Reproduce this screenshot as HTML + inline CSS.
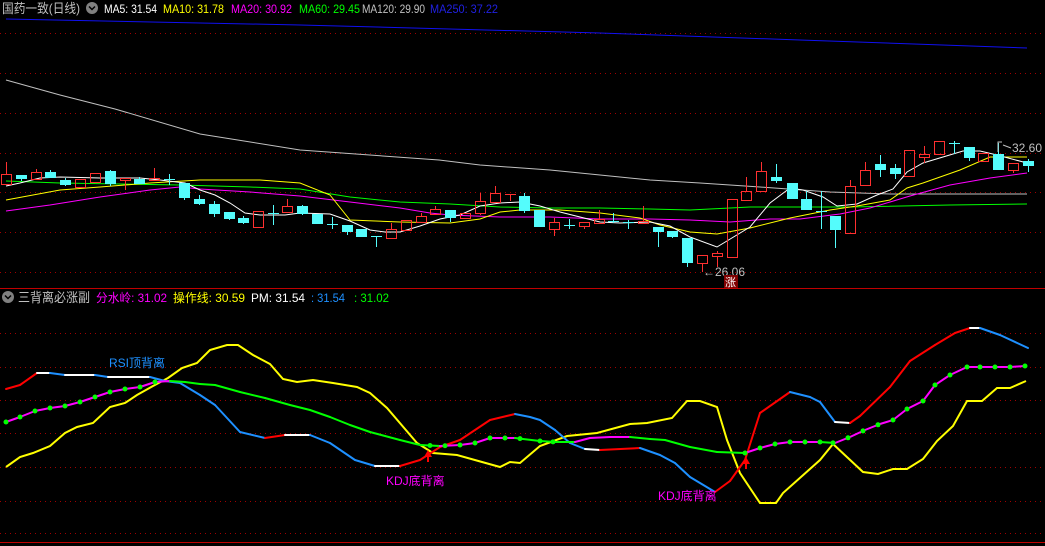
<!DOCTYPE html>
<html><head><meta charset="utf-8">
<style>
html,body{margin:0;padding:0;background:#000;width:1045px;height:546px;overflow:hidden}
svg{display:block}
text{font-family:"Liberation Sans","Noto Sans CJK SC",sans-serif}
</style></head>
<body>
<svg id="s" width="1045" height="546" xmlns="http://www.w3.org/2000/svg">
<rect width="1045" height="546" fill="#000"/>
<g id="grid"></g>
<g id="main"></g>
<g id="low"></g>
<text x="2" y="13" font-size="13" fill="#c0c0c0" textLength="78" lengthAdjust="spacingAndGlyphs">国药一致(日线)</text>
<circle cx="92" cy="8" r="6" fill="#808080"/>
<path d="M89 6.5 L92 9.5 L95 6.5" stroke="#000" stroke-width="1.5" fill="none"/>
<text x="104" y="13" font-size="12" fill="#fff" textLength="53" lengthAdjust="spacingAndGlyphs">MA5: 31.54</text>
<text x="163" y="13" font-size="12" fill="#ffff00" textLength="61" lengthAdjust="spacingAndGlyphs">MA10: 31.78</text>
<text x="231" y="13" font-size="12" fill="#ff00ff" textLength="61" lengthAdjust="spacingAndGlyphs">MA20: 30.92</text>
<text x="299" y="13" font-size="12" fill="#00ff00" textLength="61" lengthAdjust="spacingAndGlyphs">MA60: 29.45</text>
<text x="362" y="13" font-size="12" fill="#c0c0c0" textLength="63" lengthAdjust="spacingAndGlyphs">MA120: 29.90</text>
<text x="430" y="13" font-size="12" fill="#2020e0" textLength="68" lengthAdjust="spacingAndGlyphs">MA250: 37.22</text>
<line x1="0" y1="288.5" x2="1045" y2="288.5" stroke="#c00000" stroke-width="1"/>
<line x1="0" y1="542.5" x2="1045" y2="542.5" stroke="#c00000" stroke-width="1"/>
<circle cx="8" cy="297" r="6" fill="#808080"/>
<path d="M5 295.5 L8 298.5 L11 295.5" stroke="#000" stroke-width="1.5" fill="none"/>
<text x="18" y="302" font-size="13" fill="#c0c0c0" textLength="72" lengthAdjust="spacingAndGlyphs">三背离必涨副</text>
<text x="96" y="302" font-size="12" fill="#ff00ff" textLength="71" lengthAdjust="spacingAndGlyphs">分水岭: 31.02</text>
<text x="173" y="302" font-size="12" fill="#ffff00" textLength="72" lengthAdjust="spacingAndGlyphs">操作线: 30.59</text>
<text x="251" y="302" font-size="12" fill="#fff" textLength="54" lengthAdjust="spacingAndGlyphs">PM: 31.54</text>
<text x="311" y="302" font-size="12" fill="#1e90ff" textLength="34" lengthAdjust="spacingAndGlyphs">: 31.54</text>
<text x="354" y="302" font-size="12" fill="#00ff00" textLength="35" lengthAdjust="spacingAndGlyphs">: 31.02</text>
<text x="703" y="276" font-size="12" fill="#c0c0c0">←26.06</text>
<rect x="724" y="275" width="14" height="13" fill="#800000"/>
<text x="725" y="286" font-size="11" fill="#fff">涨</text>
<path d="M998 152 L998 142 L1002 142 M1003 145 L1011 148" stroke="#c0c0c0" fill="none"/>
<text x="1012" y="152" font-size="12" fill="#c0c0c0">32.60</text>
<text x="109" y="367" font-size="12" fill="#1e90ff">RSI顶背离</text>
<text x="386" y="485" font-size="12" fill="#ff00ff">KDJ底背离</text>
<text x="658" y="500" font-size="12" fill="#ff00ff">KDJ底背离</text>
<path d="M428 450 L424 457 L427 457 L427 462 L429 462 L429 457 L432 457 Z" fill="#ff0000"/>
<path d="M746 457 L742 464 L745 464 L745 469 L747 469 L747 464 L750 464 Z" fill="#ff0000"/>
</svg>
<script>
var NS="http://www.w3.org/2000/svg";
function el(p,t,a){var e=document.createElementNS(NS,t);for(var k in a)e.setAttribute(k,a[k]);document.getElementById(p).appendChild(e);return e;}
[33,73,113,153,192,232,272,333,367,400,433,467,501,533].forEach(function(y){
 el("grid","line",{x1:0,y1:y+0.5,x2:1045,y2:y+0.5,stroke:"#a00000","stroke-dasharray":"1 4"});
});
function pl(g,pts,c,w){el(g,"polyline",{points:pts.map(function(p){return p.join(",")}).join(" "),fill:"none",stroke:c,"stroke-width":w});}
pl("main",[[6,19],[300,25],[600,33],[800,40],[1027,48]],"#1010f0",1);
pl("main",[[6,80],[60,95],[115,109],[200,134],[300,150],[439,160],[480,165],[550,170],[600,175],[650,180],[700,183],[760,187],[830,192],[890,194],[1027,194]],"#c0c0c0",1);
pl("main",[[6,181],[60,183],[120,184],[180,185],[250,187],[300,189],[350,197],[400,202],[450,204],[500,207],[550,208],[600,208],[650,209],[690,210],[750,207],[850,207],[950,205],[1027,204]],"#00ff00",1);
pl("main",[[6,211],[50,205],[100,197],[150,190],[180,187],[200,189],[250,192],[300,196],[350,202],[400,208],[430,213],[450,215],[500,217],[550,217],[600,219],[650,219],[690,220],[730,222],[770,219],[800,219],[840,214],[870,208],[910,196],[950,185],[990,178],[1027,173]],"#ff00ff",1);
pl("main",[[6,200],[60,190],[100,187],[150,183],[200,180],[260,180],[300,183],[330,195],[350,220],[400,222],[450,223],[480,219],[500,212],[520,210],[560,210],[600,213],[640,218],[660,225],[690,232],[717,234],[750,228],[790,218],[830,210],[857,206],[890,200],[907,188],[923,183],[960,170],[990,157],[1027,157]],"#ffff00",1);
pl("main",[[6,186],[20,183],[40,178],[60,177],[100,178],[140,178],[160,180],[185,183],[200,190],[215,195],[230,203],[245,213],[260,215],[285,215],[300,213],[330,214],[350,221],[370,230],[385,232],[400,232],[420,226],[440,219],[460,215],[480,206],[500,203],[520,202],[540,206],[560,212],[580,217],[600,222],[620,223],[650,222],[670,226],[690,237],[717,247],[750,227],[770,203],[790,188],[803,190],[823,197],[837,206],[857,204],[877,195],[893,189],[907,172],[923,163],[943,157],[963,151],[980,151],[997,155],[1027,163]],"#ffffff",1);
var C=[[6,174,184,162,184,1],[21,175,178,175,181,0],[36,172,179,169,179,1],[50,172,177,170,177,0],[65,180,184,178,186,0],[80,179,187,179,187,1],[95,173,182,173,182,1],[110,171,183,170,186,0],[125,178,180,178,190,1],[139,179,183,177,184,0],[154,178,180,168,180,1],[169,179,180,174,185,0],[184,183,197,183,200,0],[199,199,203,195,205,0],[214,204,213,201,217,0],[229,212,218,212,220,0],[243,218,222,216,224,0],[258,211,227,211,228,1],[273,213,213,205,225,0],[287,206,212,199,212,1],[302,206,213,205,215,0],[317,214,223,214,224,0],[332,224,224,217,229,0],[347,225,231,225,235,0],[361,229,236,229,236,0],[376,236,236,236,247,0],[391,229,238,223,238,1],[406,220,230,220,230,1],[421,216,222,213,223,1],[435,209,214,206,214,1],[450,210,217,210,222,0],[465,213,218,213,218,1],[480,201,213,193,215,1],[495,193,202,186,203,1],[510,194,194,194,201,1],[524,196,210,193,213,0],[539,210,226,210,226,0],[554,222,229,218,236,1],[569,225,225,219,229,0],[584,222,226,222,229,1],[599,219,223,210,223,1],[613,221,222,213,223,0],[628,222,222,220,229,0],[643,221,223,206,223,1],[658,227,231,227,247,0],[672,231,236,231,238,0],[687,238,262,238,267,0],[702,255,263,255,272,1],[717,253,256,251,267,1],[732,199,257,199,257,1],[746,191,200,177,200,1],[761,171,191,162,191,1],[776,177,180,164,183,0],[792,183,198,183,198,0],[806,199,209,191,210,0],[821,211,211,191,229,0],[835,216,229,216,248,0],[850,186,233,180,234,1],[865,170,185,162,185,1],[880,164,169,155,177,0],[895,168,173,164,179,0],[909,150,176,150,176,1],[924,154,157,146,163,1],[939,141,154,141,154,1],[954,143,143,141,154,0],[969,147,157,147,161,0],[983,153,161,153,161,1],[998,154,169,143,170,0],[1013,163,170,163,173,1],[1028,161,165,159,172,0]];
C.forEach(function(c){
 var x=c[0],t=Math.min(c[1],c[2]),b=Math.max(c[1],c[2]),col=c[5]?"#ff3030":"#54fcfc";
 if(c[3]<t) el("main","line",{x1:x+0.5,y1:c[3],x2:x+0.5,y2:t,stroke:col});
 if(c[4]>b) el("main","line",{x1:x+0.5,y1:b,x2:x+0.5,y2:c[4],stroke:col});
 if(b-t<2){el("main","line",{x1:x-5,y1:t+0.5,x2:x+6,y2:t+0.5,stroke:col});}
 else if(c[5]) el("main","rect",{x:x-5+0.5,y:t+0.5,width:10,height:b-t,fill:"none",stroke:col});
 else el("main","rect",{x:x-5,y:t,width:11,height:b-t+1,fill:col});
});
pl("low",[[6,467],[20,457],[33,453],[50,446],[65,433],[77,427],[93,423],[110,407],[125,403],[137,395],[153,386],[168,378],[182,368],[197,363],[210,350],[227,345],[238,345],[253,355],[270,364],[283,379],[297,382],[313,380],[333,383],[357,387],[370,393],[387,408],[417,443],[433,453],[457,455],[500,467],[510,462],[520,463],[540,446],[567,436],[597,433],[630,424],[647,423],[672,418],[687,401],[700,401],[717,407],[727,440],[740,473],[760,503],[776,503],[783,493],[820,460],[833,444],[863,472],[878,474],[893,469],[907,469],[923,459],[937,441],[953,426],[967,401],[982,401],[997,388],[1010,388],[1026,381]],"#ffff00",2);
function seg(pts,fn){for(var i=1;i<pts.length;i++){el("low","line",{x1:pts[i-1][0],y1:pts[i-1][1],x2:pts[i][0],y2:pts[i][1],stroke:fn(pts[i-1],pts[i],i),"stroke-width":2,"stroke-linecap":"round"});}}
var R=[[6,389],[20,385],[37,373],[50,373],[65,375],[95,375],[108,377],[150,377],[165,381],[180,383],[200,395],[215,405],[240,432],[265,438],[285,435],[310,435],[330,443],[355,460],[375,466],[400,466],[420,460],[440,447],[460,440],[490,420],[515,414],[530,417],[540,420],[555,430],[570,443],[585,449],[600,450],[640,448],[660,455],[675,463],[690,477],[715,492],[730,481],[745,460],[760,413],[790,392],[810,397],[820,402],[835,422],[850,423],[860,416],[890,387],[910,361],[935,345],[955,333],[970,328],[980,328],[1000,335],[1028,348]];
seg(R,function(a,b){var d=b[1]-a[1];return d<-1.5?"#ff0000":(d>1.5?"#1e90ff":"#ffffff");});
var M=[[6,422],[20,417],[35,411],[50,408],[65,406],[80,402],[95,397],[110,392],[125,389],[140,387],[155,382],[170,381],[185,382],[200,384],[215,385],[240,392],[265,398],[290,405],[310,410],[330,417],[350,425],[370,432],[400,440],[420,445],[440,446],[460,445],[475,443],[490,438],[515,438],[523,439],[540,441],[555,442],[575,442],[590,438],[610,437],[630,437],[650,439],[665,440],[690,447],[717,452],[745,453],[760,448],[775,444],[790,442],[820,442],[835,443],[850,437],[865,430],[880,424],[893,420],[907,409],[923,401],[935,385],[950,375],[967,367],[980,367],[995,367],[1010,367],[1025,366]];
var last="#ff00ff";
seg(M,function(a,b){var d=b[1]-a[1];if(d<-0.3)last="#ff00ff";else if(d>0.3)last="#00ff00";return last;});
[6,20,35,50,65,80,95,110,125,140,155,430,445,460,475,490,505,520,540,553,745,760,775,790,805,820,833,848,863,878,893,907,923,935,950,967,980,995,1010,1025].forEach(function(x){
 var y=0;for(var i=1;i<M.length;i++){if(M[i][0]>=x){var a=M[i-1],b=M[i];y=a[1]+(b[1]-a[1])*(x-a[0])/((b[0]-a[0])||1);break;}}
 el("low","circle",{cx:x,cy:y,r:2.5,fill:"#00ff00"});
});
</script>
</body></html>
